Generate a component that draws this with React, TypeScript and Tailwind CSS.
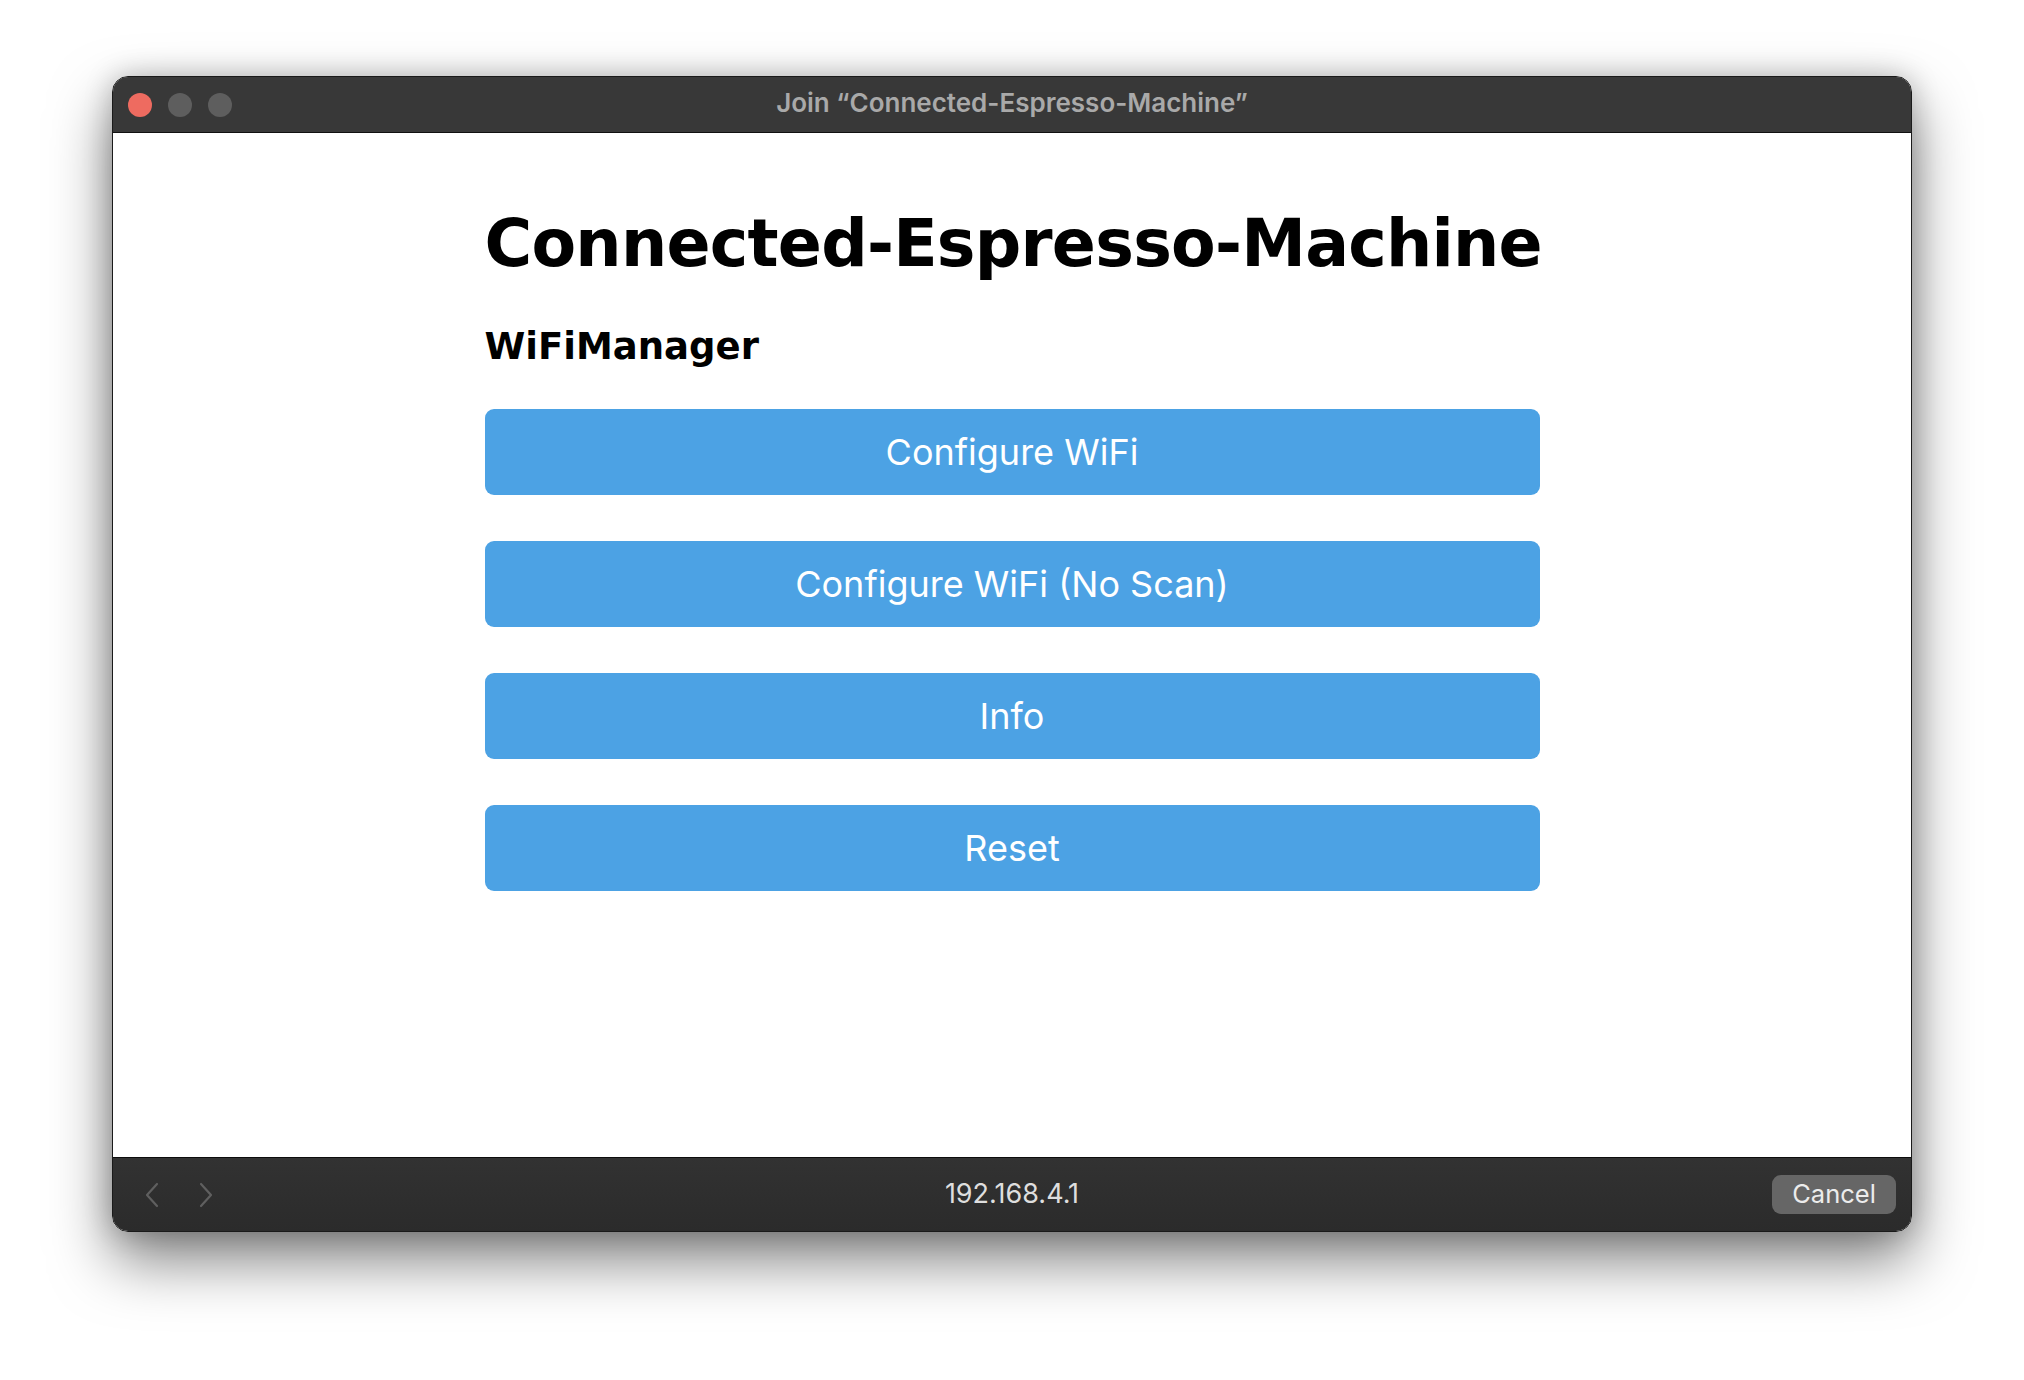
import React from "react";

function Chevron({ dir }: { dir: "left" | "right" }) {
  return (
    <svg width="16" height="26" viewBox="0 0 16 26" fill="none">
      {dir === "left" ? (
        <path d="M13 2 L3 13 L13 24" stroke="#5f5f5f" strokeWidth="2.2" strokeLinecap="round" strokeLinejoin="round" />
      ) : (
        <path d="M3 2 L13 13 L3 24" stroke="#5f5f5f" strokeWidth="2.2" strokeLinecap="round" strokeLinejoin="round" />
      )}
    </svg>
  );
}

const buttons = ["Configure WiFi", "Configure WiFi (No Scan)", "Info", "Reset"];

export default function App() {
  return (
    <div className="w-[2024px] h-[1380px] bg-white pt-[76px] pl-[112px] overflow-hidden">
      <div className="w-[1800px] h-[1156px] flex flex-col rounded-[16px] overflow-hidden border border-[#1a1a1a] shadow-[0_28px_60px_rgba(0,0,0,0.5),0_0_28px_rgba(0,0,0,0.22)]">
        {/* title bar */}
        <div className="h-[56px] shrink-0 bg-[#383838] border-b border-[#111] grid grid-cols-[1fr_auto_1fr] items-center">
          <div className="flex items-center gap-[16px] pl-[15px]">
            <span className="w-[24px] h-[24px] rounded-full bg-[#ee6b60]" />
            <span className="w-[24px] h-[24px] rounded-full bg-[#5e5e5e]" />
            <span className="w-[24px] h-[24px] rounded-full bg-[#5e5e5e]" />
          </div>
          <div className="pb-[4px] text-[26px] font-semibold text-[#a9a9a9] font-['Inter',sans-serif]">
            Join “Connected-Espresso-Machine”
          </div>
          <div />
        </div>
        {/* content */}
        <div className="flex-1 bg-white flex justify-center">
          <div className="w-[1055px] flex flex-col pt-[78px]">
            <h1 className="whitespace-nowrap text-[65px] leading-none font-bold tracking-[-0.75px] text-black font-['DejaVu_Sans',sans-serif]">
              Connected-Espresso-Machine
            </h1>
            <h3 className="mt-[52px] whitespace-nowrap text-[37px] leading-none font-bold text-black font-['DejaVu_Sans',sans-serif]">
              WiFiManager
            </h3>
            <div className="mt-[44px] flex flex-col gap-[46px]">
              {buttons.map((b) => (
                <div
                  key={b}
                  className="h-[86px] rounded-[9px] bg-[#4ca2e4] flex items-center justify-center text-white text-[36px] font-['Inter',sans-serif]"
                >
                  {b}
                </div>
              ))}
            </div>
          </div>
        </div>
        {/* bottom bar */}
        <div className="h-[74px] shrink-0 bg-gradient-to-b from-[#323232] to-[#2b2b2b] border-t border-[#0d0d0d] grid grid-cols-[1fr_auto_1fr] items-center">
          <div className="flex items-center gap-[38px] pl-[31px]">
            <Chevron dir="left" />
            <Chevron dir="right" />
          </div>
          <div className="text-[27px] text-[#dedede] font-['Inter',sans-serif]">192.168.4.1</div>
          <div className="flex justify-end pr-[15px]">
            <div className="w-[124px] h-[39px] rounded-[9px] bg-[#666666] flex items-center justify-center text-[25.5px] text-[#ececec] font-['Inter',sans-serif]">
              Cancel
            </div>
          </div>
        </div>
      </div>
    </div>
  );
}
